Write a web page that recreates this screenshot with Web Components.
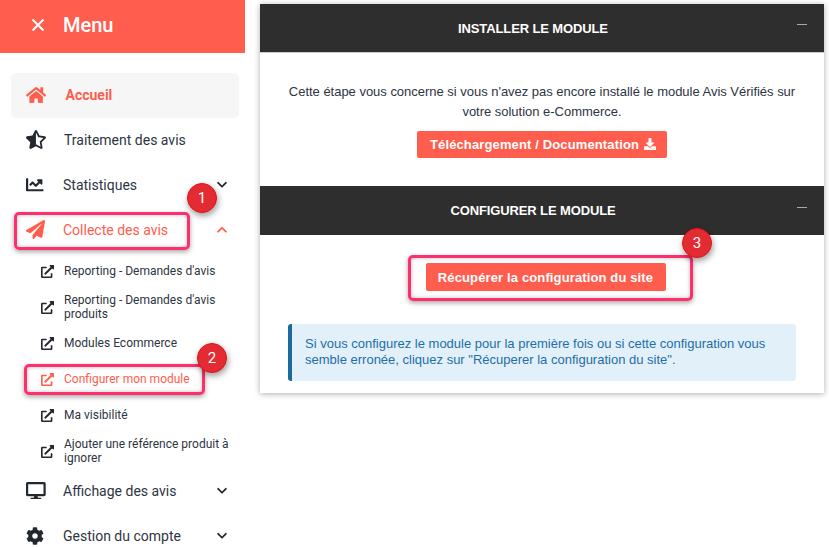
<!DOCTYPE html>
<html lang="fr"><head><meta charset="utf-8"><title>Menu</title>
<style>
html,body{margin:0;padding:0;height:547px;overflow:hidden;background:#fff}
body{font-family:Roboto,"Liberation Sans",sans-serif;color:#2e3542}
#app{display:flex;height:547px;position:relative;overflow:hidden}
</style></head><body>
<div id="app">
<av-sidebar>
  <av-nav icon="home" active>Accueil</av-nav>
  <av-nav icon="star">Traitement des avis</av-nav>
  <av-nav icon="chart" caret="down">Statistiques</av-nav>
  <av-nav icon="plane" caret="up" open>Collecte des avis</av-nav>
  <av-sub>Reporting - Demandes d'avis</av-sub>
  <av-sub>Reporting - Demandes d'avis produits</av-sub>
  <av-sub>Modules Ecommerce</av-sub>
  <av-sub current>Configurer mon module</av-sub>
  <av-sub>Ma visibilité</av-sub>
  <av-sub>Ajouter une référence produit à ignorer</av-sub>
  <av-nav icon="desktop" caret="down">Affichage des avis</av-nav>
  <av-nav icon="cog" caret="down">Gestion du compte</av-nav>
</av-sidebar>
<av-main>
  <av-panel heading="INSTALLER LE MODULE">
    <p class="intro" slot="intro">Cette étape vous concerne si vous n'avez pas encore installé le module Avis Vérifiés sur votre solution e-Commerce.</p>
    <av-button download>Téléchargement / Documentation</av-button>
  </av-panel>
  <av-panel heading="CONFIGURER LE MODULE" variant="config">
    <av-button>Récupérer la configuration du site</av-button>
    <av-alert>Si vous configurez le module pour la première fois ou si cette configuration vous semble erronée, cliquez sur "Récuperer la configuration du site".</av-alert>
  </av-panel>
</av-main>
<av-mark style="left:14px;top:212px;width:176px;height:38px"></av-mark>
<av-mark style="left:24px;top:364px;width:181px;height:31px"></av-mark>
<av-mark style="left:408px;top:255px;width:285px;height:46px"></av-mark>
<av-badge style="left:187px;top:183px">1</av-badge>
<av-badge style="left:197px;top:343px">2</av-badge>
<av-badge style="left:682px;top:228px">3</av-badge>
</div>
<script>
const ICONS={
home:['0 0 576 512','M280.37 148.26L96 300.11V464a16 16 0 0 0 16 16l112.06-.29a16 16 0 0 0 15.92-16V368a16 16 0 0 1 16-16h64a16 16 0 0 1 16 16v95.64a16 16 0 0 0 16 16.05L464 480a16 16 0 0 0 16-16V300L295.67 148.26a12.19 12.19 0 0 0-15.3 0zM571.6 251.47L488 182.56V44.05a12 12 0 0 0-12-12h-56a12 12 0 0 0-12 12v72.61L318.47 43a48 48 0 0 0-61 0L4.34 251.47a12 12 0 0 0-1.6 16.9l25.5 31A12 12 0 0 0 45.15 301l235.22-193.74a12.19 12.19 0 0 1 15.3 0L530.9 301a12 12 0 0 0 16.9-1.6l25.5-31a12 12 0 0 0-1.7-16.93z'],
star:['0 0 536 512','M508.55 171.51L362.18 150.2 296.77 17.81C290.89 5.98 279.42 0 267.95 0c-11.4 0-22.79 5.9-28.69 17.81l-65.43 132.38-146.38 21.29c-26.25 3.8-36.77 36.09-17.74 54.59l105.89 103-25.06 145.48C86.98 495.33 103.57 512 122.15 512c4.93 0 10-1.17 14.87-3.75l130.95-68.68 130.94 68.7c4.86 2.55 9.92 3.71 14.83 3.71 18.6 0 35.22-16.61 31.66-37.4l-25.03-145.49 105.91-102.98c19.04-18.5 8.52-50.8-17.73-54.6zm-121.74 123.2l-18.12 17.62 4.28 24.88 19.52 113.45-102.13-53.59-22.38-11.74.03-317.19 51.03 103.29 11.18 22.63 25.01 3.64 114.23 16.63-82.65 80.38z'],
chart:['0 0 512 512','M496 384H64V80c0-8.84-7.16-16-16-16H16C7.16 64 0 71.16 0 80v336c0 17.67 14.33 32 32 32h464c8.84 0 16-7.16 16-16v-32c0-8.84-7.16-16-16-16zM464 96H345.94c-21.38 0-32.09 25.85-16.97 40.97l32.4 32.4L288 242.75l-73.37-73.37c-12.5-12.5-32.76-12.5-45.25 0l-68.69 68.69c-6.25 6.25-6.25 16.38 0 22.63l22.62 22.62c6.25 6.25 16.38 6.25 22.63 0L192 237.25l73.37 73.37c12.5 12.5 32.76 12.5 45.25 0l96-96 32.4 32.4c15.12 15.12 40.97 4.41 40.97-16.97V112c.01-8.84-7.15-16-15.99-16z'],
plane:['0 0 512 512','M476 3.2L12.5 270.6c-18.1 10.4-15.8 35.6 2.2 43.2L121 358.4l287.3-253.2c5.5-4.9 13.3 2.6 8.6 8.3L176 407v80.5c0 23.6 28.5 32.9 42.5 15.8L282 426l124.6 52.2c14.2 6 30.4-2.9 33-18.2l72-432C515 7.8 493.3-6.8 476 3.2z'],
ext:['0 0 512 512','M432 320h-32a16 16 0 0 0-16 16v112H64V128h144a16 16 0 0 0 16-16V80a16 16 0 0 0-16-16H48A48 48 0 0 0 0 112v352a48 48 0 0 0 48 48h352a48 48 0 0 0 48-48V336a16 16 0 0 0-16-16zM488 0H360c-21.37 0-32.05 25.91-17 41l35.73 35.73L135 320.37a24 24 0 0 0 0 34L157.67 377a24 24 0 0 0 34 0l243.61-243.68L471 169c15 15 41 4.5 41-17V24a24 24 0 0 0-24-24z'],
desktop:['0 0 576 512','M528 0H48C21.5 0 0 21.5 0 48v320c0 26.5 21.5 48 48 48h192l-16 48h-72c-13.3 0-24 10.7-24 24s10.7 24 24 24h272c13.3 0 24-10.7 24-24s-10.7-24-24-24h-72l-16-48h192c26.5 0 48-21.5 48-48V48c0-26.5-21.5-48-48-48zm-16 352H64V64h448v288z'],
cog:['0 0 512 512','M487.4 315.7l-42.6-24.6c4.3-23.2 4.3-47 0-70.2l42.6-24.6c4.9-2.8 7.1-8.6 5.5-14-11.1-35.6-30-67.8-54.7-94.6-3.8-4.1-10-5.1-14.8-2.3L380.8 110c-17.9-15.4-38.5-27.3-60.8-35.1V25.8c0-5.6-3.9-10.5-9.4-11.7-36.7-8.2-74.3-7.8-109.2 0-5.5 1.2-9.4 6.1-9.4 11.7V75c-22.2 7.9-42.8 19.8-60.8 35.1L88.7 85.5c-4.9-2.8-11-1.9-14.8 2.3-24.7 26.7-43.6 58.9-54.7 94.6-1.7 5.4.6 11.2 5.5 14L67.3 221c-4.3 23.2-4.3 47 0 70.2l-42.6 24.6c-4.9 2.8-7.1 8.6-5.5 14 11.1 35.6 30 67.8 54.7 94.6 3.8 4.1 10 5.1 14.8 2.3l42.6-24.6c17.9 15.4 38.5 27.3 60.8 35.1v49.2c0 5.6 3.9 10.5 9.4 11.7 36.7 8.2 74.3 7.8 109.2 0 5.5-1.2 9.4-6.1 9.4-11.7v-49.2c22.2-7.9 42.8-19.8 60.8-35.1l42.6 24.6c4.9 2.8 11 1.9 14.8-2.3 24.7-26.7 43.6-58.9 54.7-94.6 1.5-5.5-.7-11.3-5.6-14.1zM256 336c-44.1 0-80-35.9-80-80s35.9-80 80-80 80 35.9 80 80-35.9 80-80 80z'],
down:['0 0 448 512','M207.029 381.476L12.686 187.132c-9.373-9.373-9.373-24.569 0-33.941l22.667-22.667c9.357-9.357 24.522-9.375 33.901-.04L224 284.505l154.745-154.021c9.379-9.335 24.544-9.317 33.901.04l22.667 22.667c9.373 9.373 9.373 24.569 0 33.941L240.971 381.476c-9.373 9.372-24.569 9.372-33.942 0z'],
up:['0 0 448 512','M240.971 130.524l194.343 194.343c9.373 9.373 9.373 24.569 0 33.941l-22.667 22.667c-9.357 9.357-24.522 9.375-33.901.04L224 227.495 69.255 381.516c-9.379 9.335-24.544 9.317-33.901-.04l-22.667-22.667c-9.373-9.373-9.373-24.569 0-33.941L207.03 130.525c9.372-9.373 24.568-9.373 33.941-.001z'],
download:['0 0 512 512','M216 0h80c13.3 0 24 10.7 24 24v168h87.7c17.8 0 26.7 21.5 14.1 34.1L269.7 378.3c-7.5 7.5-19.8 7.5-27.3 0L90.1 226.1c-12.6-12.6-3.7-34.1 14.1-34.1H192V24c0-13.3 10.7-24 24-24zm296 376v112c0 13.3-10.7 24-24 24H24c-13.3 0-24-10.7-24-24V376c0-13.3 10.7-24 24-24h146.7l49 49c20.1 20.1 52.5 20.1 72.6 0l49-49H488c13.3 0 24 10.7 24 24zm-124 88c0-11-9-20-20-20s-20 9-20 20 9 20 20 20 20-9 20-20zm64 0c0-11-9-20-20-20s-20 9-20 20 9 20 20 20 20-9 20-20z']
};
const svg=(n,h,cls='')=>{const[v,d]=ICONS[n];const[, ,w,ht]=v.split(' ').map(Number);return `<svg class="${cls}" viewBox="${v}" height="${h}" width="${h*w/ht}" fill="currentColor" aria-hidden="true"><path d="${d}"/></svg>`};
class Base extends HTMLElement{
  constructor(){super();this.attachShadow({mode:'open'})}
  connectedCallback(){this.shadowRoot.innerHTML=this.render()}
}
const ARIAL='"Liberation Sans",Arial,sans-serif';
customElements.define('av-sidebar',class extends Base{render(){return `<style>
:host{display:block;width:245px;flex:none}
header{height:53px;background:#ff5d4d;color:#fff;display:flex;align-items:center;box-sizing:border-box;padding:0 0 4px 31px;font:500 20px Roboto,sans-serif}
header svg{width:14px;height:14px;margin-right:18px}
nav{display:block;padding:20px 6px 0 11px}
</style><header><svg viewBox="0 0 14 14"><path d="M1.5 1.5l11 11M12.5 1.5l-11 11" stroke="#fff" stroke-width="2" fill="none"/></svg><span>Menu</span></header><nav><slot></slot></nav>`}});
customElements.define('av-nav',class extends Base{render(){
const a=this.hasAttribute('active'),o=this.hasAttribute('open'),c=this.getAttribute('caret'),i=this.getAttribute('icon');
const sizes={home:18,star:19,chart:17.5,plane:19,desktop:17.5,cog:18};
return `<style>
:host{display:block;height:45px}
.r{height:45px;display:flex;align-items:center;box-sizing:border-box;padding-bottom:2px;border-radius:5px;font:400 14px/20px Roboto,sans-serif;color:${o||a?'#ff5d4d':'#2e3542'};background:${a?'#f6f6f6':'transparent'};font-weight:${a?700:400}}
.i{width:${a||i==='star'?53:52}px;flex:none;display:flex;padding-left:15px;color:${o||a?'#ff5d4d':'#23272e'};box-sizing:border-box;margin-right:${a?'1.5px':'0'}}
.t{flex:1}
.c{width:10px;margin-right:12px;display:flex;color:${o?'#ff5d4d':'#23272e'}}
</style><div class="r"><span class="i">${svg(i,sizes[i])}</span><span class="t"><slot></slot></span>${c?`<span class="c">${svg(c,11.5)}</span>`:''}</div>`}});
customElements.define('av-sub',class extends Base{render(){
const u=this.hasAttribute('current');
return `<style>
:host{display:block}
.r{min-height:36px;padding:4px 0;display:flex;align-items:center;box-sizing:border-box;font:400 12px/14px Roboto,sans-serif;color:${u?'#ff5d4d':'#2e3542'}}
.i{width:13px;margin:0 10px 0 30px;flex:none;display:flex;color:${u?'#ff5d4d':'#23272e'}}
</style><div class="r"><span class="i">${svg('ext',13)}</span><span><slot></slot></span></div>`}});
customElements.define('av-main',class extends Base{render(){return `<style>
:host{display:block;width:564px;height:389px;margin:4px 5px 0 15px;background:#fff;box-shadow:0 1px 6px rgba(0,0,0,.32);flex:none}
</style><slot></slot>`}});
customElements.define('av-panel',class extends Base{render(){
const cfg=this.getAttribute('variant')==='config';
return `<style>
:host{display:block}
.h{height:49px;background:#2e2e2e;color:#fff;display:flex;align-items:center;justify-content:center;position:relative;box-sizing:border-box;padding-right:18px;font:700 13px ${ARIAL};letter-spacing:-.12px;${cfg?'':'border-bottom:1px solid #c9c9c9;'}}
.m{position:absolute;right:17px;top:${cfg?21:20}px;width:10px;height:1px;background:#aaa}
.b{display:flex;flex-direction:column;align-items:center;padding:${cfg?'28px 28px 12px':'0 28px 28px'};${cfg?'':'height:133px;box-sizing:border-box;'}}
::slotted(p){margin:29px 0 9px;text-align:center;font:400 13px/20px ${ARIAL};letter-spacing:-.02px;color:#2e3542}
${cfg?'::slotted(av-button){margin-left:8px}':''}
</style><div class="h"><span>${this.getAttribute('heading')}</span><span class="m"></span></div><div class="b"><slot name="intro"></slot><slot></slot></div>`}});
customElements.define('av-button',class extends Base{render(){
const d=this.hasAttribute('download');
return `<style>
:host{display:block}
.b{display:flex;align-items:center;gap:5px;height:${d?27:28}px;padding:0 ${d?'11px 1px 13px':'13px 0 12px'};box-sizing:border-box;background:#ff5d4d;color:#fff;border-radius:2px;font:700 13px ${ARIAL};letter-spacing:.13px}
</style><div class="b"><slot></slot>${d?svg('download',12):''}</div>`}});
customElements.define('av-alert',class extends Base{render(){return `<style>
:host{display:block;align-self:stretch;margin-top:33px;background:#e2f0fa;border-left:4px solid #1a6aa0;border-radius:3px;padding:12px 16px 12px 13px;color:#1e6ea7;font:400 13px/16px ${ARIAL};box-sizing:border-box;height:57px}
</style><slot></slot>`}});
customElements.define('av-mark',class extends Base{render(){return `<style>
:host{display:block;position:absolute;box-sizing:border-box;border:3px solid #ff2e6c;border-radius:5px;box-shadow:0 2px 5px rgba(0,0,0,.35),inset 0 0 4px rgba(0,0,0,.25);pointer-events:none}
</style>`}});
customElements.define('av-badge',class extends Base{render(){return `<style>
:host{display:flex;position:absolute;width:30px;height:30px;box-sizing:border-box;align-items:center;justify-content:center;border-radius:50%;background:#e22b33;border:1px solid #e81010;color:#fff;font:400 15px Roboto,sans-serif;box-shadow:1px 3px 6px rgba(0,0,0,.4)}
</style><slot></slot>`}});
</script>
</body></html>
